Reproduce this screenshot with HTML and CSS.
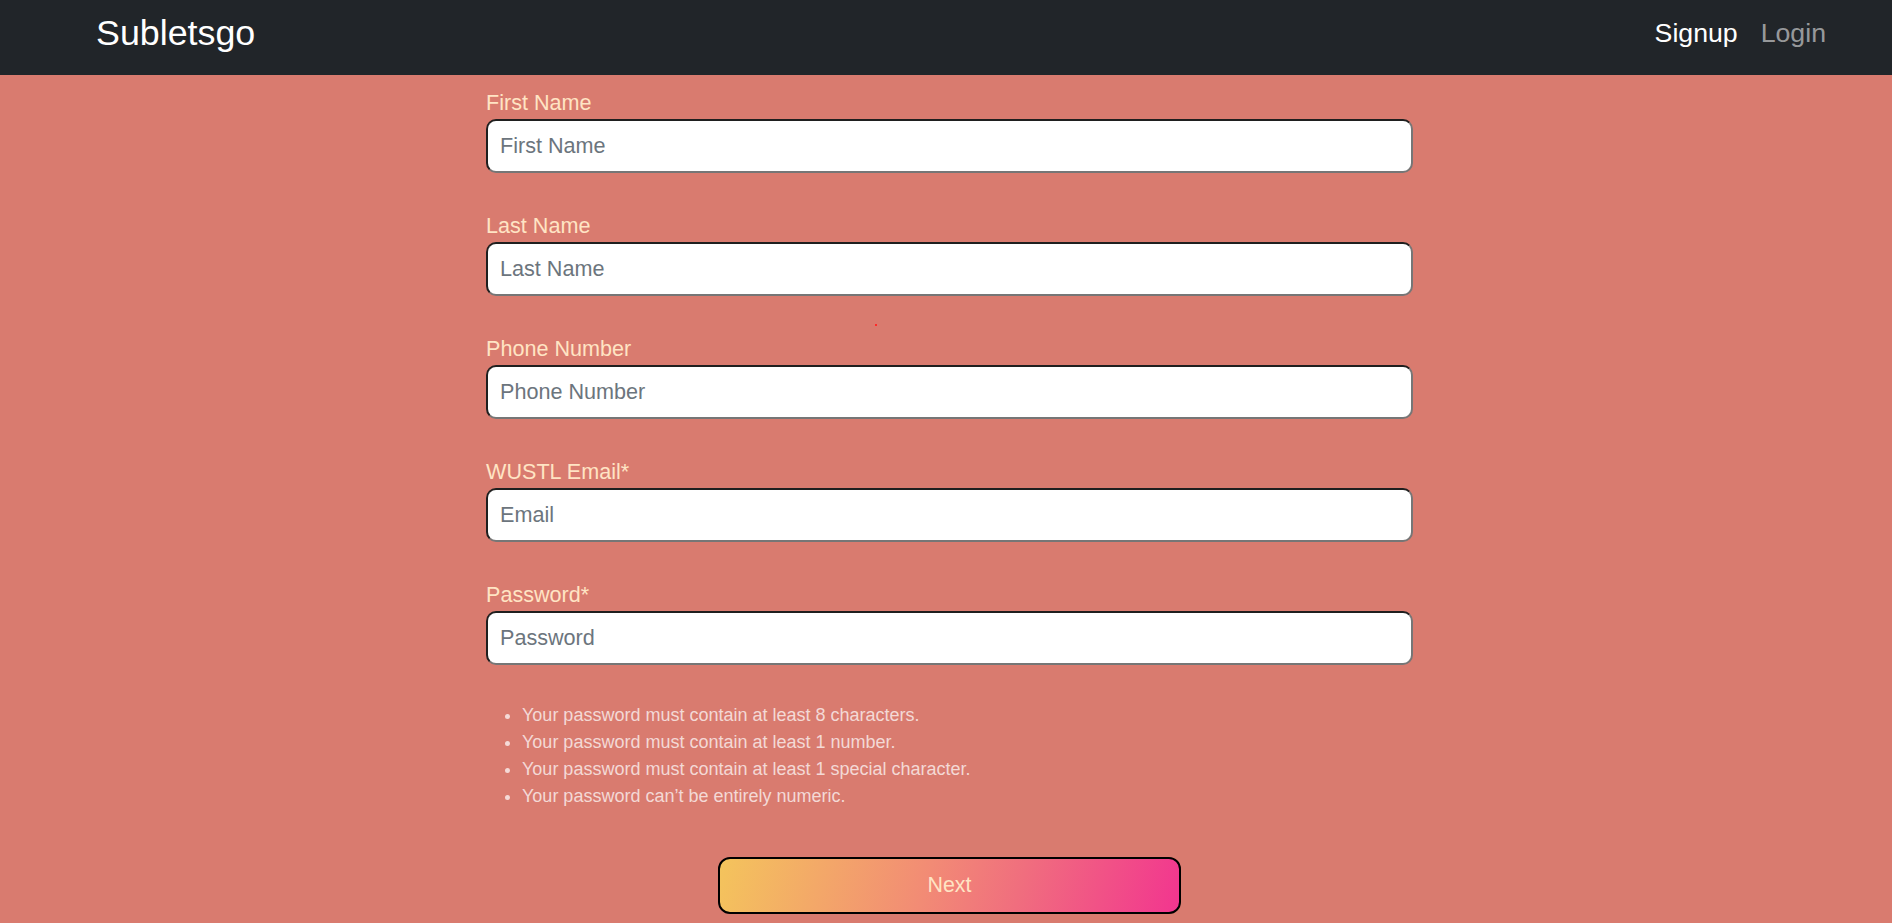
FILE: index.html
```html
<!DOCTYPE html>
<html lang="en">
<head>
<meta charset="utf-8">
<title>Subletsgo - Signup</title>
<link rel="stylesheet" href="styles.css">
</head>
<body>
<nav class="navbar">
  <a class="brand" href="#">Subletsgo</a>
  <div class="nav-links">
    <a class="nav-link active" href="#">Signup</a>
    <a class="nav-link" href="#">Login</a>
  </div>
</nav>
<main class="page">
  <form class="signup-form">
    <div class="field">
      <label class="field-label" for="first">First Name</label>
      <input class="field-input" id="first" type="text" placeholder="First Name">
    </div>
    <div class="field">
      <label class="field-label" for="last">Last Name</label>
      <input class="field-input" id="last" type="text" placeholder="Last Name">
    </div>
    <span class="error-dot"></span>
    <div class="field">
      <label class="field-label" for="phone">Phone Number</label>
      <input class="field-input" id="phone" type="text" placeholder="Phone Number">
    </div>
    <div class="field">
      <label class="field-label" for="email">WUSTL Email*</label>
      <input class="field-input" id="email" type="email" placeholder="Email">
    </div>
    <div class="field">
      <label class="field-label" for="password">Password*</label>
      <input class="field-input" id="password" type="password" placeholder="Password">
    </div>
    <ul class="rules">
      <li>Your password must contain at least 8 characters.</li>
      <li>Your password must contain at least 1 number.</li>
      <li>Your password must contain at least 1 special character.</li>
      <li>Your password can’t be entirely numeric.</li>
    </ul>
    <button class="next-btn" type="button">Next</button>
  </form>
</main>
</body>
</html>
```
FILE: styles.css
```css
* {
  box-sizing: border-box;
}

html, body {
  margin: 0;
  padding: 0;
}

body {
  background: #d97b6f;
  font-family: "Liberation Sans", Arial, sans-serif;
  min-height: 100vh;
}

.navbar {
  height: 75px;
  background: #212529;
  display: flex;
  align-items: center;
  justify-content: space-between;
  padding: 0 66px 8px 96px;
}

.brand {
  color: #ffffff;
  font-size: 35.8px;
  text-decoration: none;
  line-height: 1.2;
}

.nav-links {
  display: flex;
  gap: 23px;
}

.nav-link {
  font-size: 26.7px;
  color: rgba(255, 255, 255, 0.55);
  text-decoration: none;
  line-height: 1.2;
}

.nav-link.active {
  color: #ffffff;
}

.page {
  padding: 12px 0 0 7px;
}

.signup-form {
  position: relative;
  width: 927px;
  margin: 0 auto;
  display: flex;
  flex-direction: column;
  gap: 37.5px;
}

.field {
  display: flex;
  flex-direction: column;
}

.field-label {
  color: #ffe4c4;
  font-size: 21.6px;
  line-height: 31.5px;
}

.field-input {
  height: 54px;
  width: 100%;
  background: #ffffff;
  border: 2px solid;
  border-color: #1f1f1f #767676 #767676 #1f1f1f;
  border-radius: 10px;
  padding: 0 12px;
  font-family: "Liberation Sans", Arial, sans-serif;
  font-size: 21.6px;
  color: #212529;
}

.field-input::placeholder {
  color: #6c757d;
}

.error-dot {
  position: absolute;
  left: 389px;
  top: 237px;
  width: 2px;
  height: 2px;
  background: #ff2a2a;
}

.rules {
  margin: 0;
  padding-left: 36px;
  color: rgba(255, 255, 255, 0.72);
  font-size: 18px;
  line-height: 27px;
}

.next-btn {
  align-self: center;
  margin-top: 9.5px;
  width: 463px;
  height: 57px;
  border: 2px solid #000000;
  border-radius: 12px;
  background: linear-gradient(105deg, #f4c45c 0%, #f28b75 45%, #f06e7e 65%, #f2358f 100%);
  color: #ffe4c4;
  font-family: "Liberation Sans", Arial, sans-serif;
  font-size: 21.4px;
  cursor: pointer;
}
```
